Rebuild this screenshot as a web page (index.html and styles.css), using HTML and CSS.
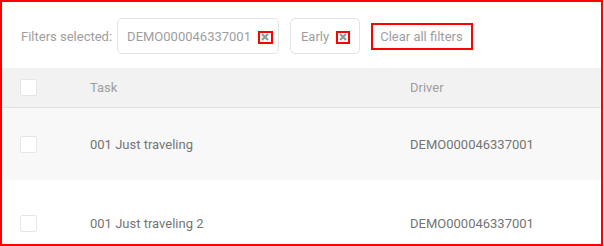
FILE: index.html
```html
<!DOCTYPE html>
<html lang="en">
<head>
    <meta charset="UTF-8">
    <meta name="viewport" content="width=device-width, initial-scale=1.0">
    <title>Tasks</title>
    <link rel="stylesheet" href="styles.css">
</head>
<body>
    <div class="panel">
        <!-- Filter bar -->
        <div class="filter-bar">
            <span class="filter-label">Filters selected:</span>
            <div class="chip">
                <span>DEMO000046337001</span>
                <span class="chip-close">
                    <svg width="8" height="8" viewBox="0 0 8 8"><path d="M1 1 L7 7 M7 1 L1 7" stroke="#999" stroke-width="2.2"/></svg>
                </span>
            </div>
            <div class="chip chip-short">
                <span>Early</span>
                <span class="chip-close">
                    <svg width="8" height="8" viewBox="0 0 8 8"><path d="M1 1 L7 7 M7 1 L1 7" stroke="#999" stroke-width="2.2"/></svg>
                </span>
            </div>
            <a class="clear-filters" href="#">Clear all filters</a>
        </div>

        <!-- Table -->
        <div class="table">
            <div class="row head">
                <span class="checkbox"></span>
                <span>Task</span>
                <span>Driver</span>
            </div>
            <div class="row odd">
                <span class="checkbox"></span>
                <span>001 Just traveling</span>
                <span>DEMO000046337001</span>
            </div>
            <div class="row last">
                <span class="checkbox"></span>
                <span>001 Just traveling 2</span>
                <span>DEMO000046337001</span>
            </div>
        </div>
    </div>
</body>
</html>
```

FILE: styles.css
```css
* {
    margin: 0;
    padding: 0;
    box-sizing: border-box;
}

body {
    font-family: Roboto, "Liberation Sans", Arial, sans-serif;
    font-size: 13px;
    background-color: #fff;
    color: #757575;
}

.panel {
    width: 603px;
    height: 246px;
    border: 2px solid #ff0000;
    overflow: hidden;
}

/* Filter bar */
.filter-bar {
    display: flex;
    align-items: center;
    height: 66px;
    padding: 2px 0 0 19px;
    color: #9e9e9e;
}

.filter-label {
    margin-right: 5px;
}

.chip {
    display: flex;
    align-items: center;
    height: 36px;
    padding: 0 5px 0 9px;
    border: 1px solid #e3e3e3;
    border-radius: 5px;
    margin-right: 11px;
}

.chip-close {
    display: flex;
    align-items: center;
    justify-content: center;
    width: 15px;
    height: 13px;
    margin-left: 7px;
    margin-top: 2px;
    border: 2px solid #ff0000;
}

.chip-short {
    padding: 0 9px 0 10px;
}

.chip-short .chip-close {
    width: 14px;
    margin-left: 7px;
}

.clear-filters {
    display: flex;
    align-items: center;
    height: 27px;
    padding: 0 8px 0 7px;
    border: 2px solid #ff0000;
    color: #9e9e9e;
    text-decoration: none;
}

/* Table */
.row {
    display: grid;
    grid-template-columns: 70px 320px 1fr;
    align-items: center;
    padding-left: 18px;
    height: 72px;
}

.row.head {
    height: 40px;
    background-color: #f2f2f2;
    border-bottom: 1px solid #e2e2e2;
    color: #9e9e9e;
}

.row.odd {
    background-color: #f8f8f8;
}

.row.last {
    height: 86px;
}

.checkbox {
    width: 17px;
    height: 17px;
    background-color: #fff;
    border: 1px solid #e6e6e6;
    border-radius: 2px;
}
```
